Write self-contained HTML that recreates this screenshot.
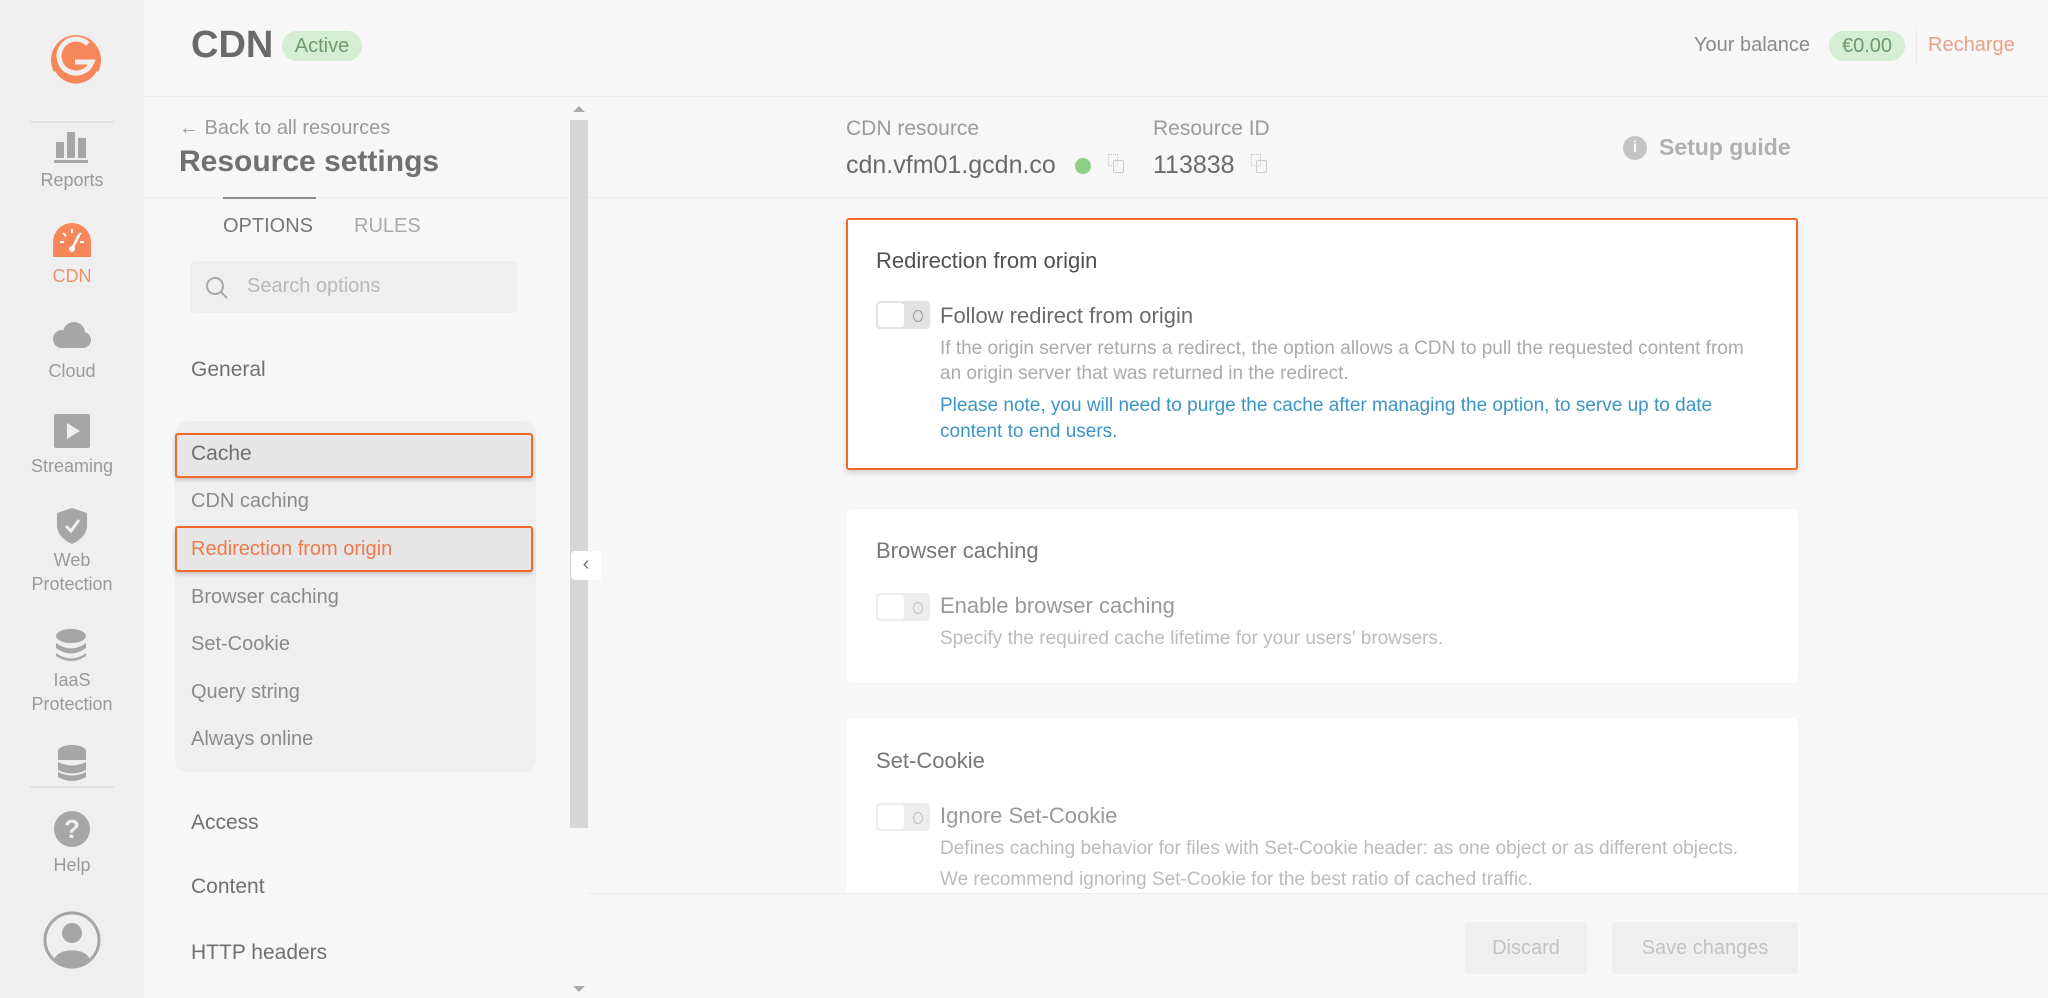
<!DOCTYPE html>
<html><head><meta charset="utf-8"><style>
*{margin:0;padding:0;box-sizing:border-box}
body{width:2048px;height:998px;position:relative;overflow:hidden;background:#f7f7f7;font-family:"Liberation Sans",sans-serif;color:#666}
.a{position:absolute;white-space:nowrap}
.sb{position:absolute;left:0;top:0;width:144px;height:998px;background:#efefef}
.lbl{position:absolute;width:144px;text-align:center;font-size:18px;color:#9a9a9a;line-height:24px}
.item{position:absolute;left:191px;font-size:20px;color:#8a8a8a;line-height:24px}
.sec{position:absolute;left:191px;font-size:21px;color:#707070;line-height:24px}
.card{position:absolute;left:846px;width:952px;background:#fff;border-radius:6px}
.tg{position:absolute;width:54px;height:28px;border-radius:4px;background:#e2e2e2}
.tg:before{content:"";position:absolute;left:2px;top:2px;width:26px;height:24px;background:#fff;border-radius:3px}
.tg:after{content:"";position:absolute;left:37px;top:9px;width:8px;height:10px;border:1.5px solid #999;border-radius:50%}
.ct{position:absolute;left:30px;font-size:22px;color:#777;line-height:26px}
.cl{position:absolute;left:94px;font-size:22px;color:#999;line-height:26px}
.cd{position:absolute;left:94px;font-size:19px;color:#bbb;line-height:24px}
</style></head><body>
<div class="sb">
 <svg class="a" style="left:48px;top:32px" width="56" height="56" viewBox="0 0 56 56"><circle cx="28" cy="28" r="25" fill="#f5875a"/><path d="M40 12 A17 17 0 1 0 44 30 L27 30" fill="none" stroke="#efefef" stroke-width="5"/><path d="M6 40 A25 25 0 0 0 50 40" fill="none" stroke="#efefef" stroke-width="3"/></svg>
 <div class="a" style="left:30px;top:121px;width:84px;height:2px;background:#e2e2e2"></div>
 <svg class="a" style="left:54px;top:128px" width="34" height="36"><rect x="2" y="14" width="8" height="16" fill="#a6a6a6"/><rect x="13" y="4" width="8" height="26" fill="#a6a6a6"/><rect x="24" y="10" width="8" height="20" fill="#a6a6a6"/><rect x="0" y="32" width="34" height="3" fill="#a6a6a6"/></svg>
 <div class="lbl" style="top:168px">Reports</div>
 <svg class="a" style="left:53px;top:223px" width="38" height="34"><path d="M0 34 L0 19 A19 19 0 0 1 38 19 L38 34 Z" fill="#f5875a"/><path d="M19 26 L26 12" stroke="#fff" stroke-width="2.5"/><circle cx="19" cy="26" r="3" fill="#fff"/><path d="M7 19h4M27 19h4M19 6v4M10 10l3 3M28 10l-3 3" stroke="#fff" stroke-width="2"/></svg>
 <div class="lbl" style="top:264px;color:#f09068">CDN</div>
 <svg class="a" style="left:52px;top:320px" width="40" height="30"><circle cx="22" cy="13" r="11" fill="#a6a6a6"/><circle cx="10" cy="19" r="9" fill="#a6a6a6"/><circle cx="31" cy="20" r="8" fill="#a6a6a6"/><rect x="10" y="18" width="22" height="10" fill="#a6a6a6"/></svg>
 <div class="lbl" style="top:359px">Cloud</div>
 <svg class="a" style="left:54px;top:414px" width="36" height="34"><rect width="36" height="34" rx="2" fill="#a6a6a6"/><path d="M13 9 L26 17 L13 25Z" fill="#efefef"/></svg>
 <div class="lbl" style="top:454px">Streaming</div>
 <svg class="a" style="left:57px;top:508px" width="30" height="36"><path d="M15 0 L30 5 L30 17 C30 27 22 33 15 36 C8 33 0 27 0 17 L0 5Z" fill="#a6a6a6"/><path d="M9 18 L14 23 L22 12" stroke="#efefef" stroke-width="3" fill="none"/></svg>
 <div class="lbl" style="top:548px">Web<br>Protection</div>
 <svg class="a" style="left:54px;top:628px" width="34" height="34"><ellipse cx="17" cy="8" rx="15" ry="7" fill="#a6a6a6"/><path d="M2 15 Q17 26 32 15 L32 20 Q17 31 2 20Z" fill="#a6a6a6"/><path d="M2 25 Q17 36 32 25 L32 28 Q17 38 2 28Z" fill="#a6a6a6"/></svg>
 <div class="lbl" style="top:668px">IaaS<br>Protection</div>
 <svg class="a" style="left:57px;top:745px" width="30" height="38"><ellipse cx="15" cy="6" rx="14" ry="6" fill="#a6a6a6"/><rect x="1" y="6" width="28" height="9" fill="#a6a6a6"/><path d="M1 17 Q15 24 29 17 L29 25 Q15 32 1 25Z" fill="#a6a6a6"/><path d="M1 27 Q15 34 29 27 L29 32 Q15 40 1 32Z" fill="#a6a6a6"/></svg>
 <div class="a" style="left:30px;top:786px;width:84px;height:2px;background:#e2e2e2"></div>
 <svg class="a" style="left:54px;top:811px" width="36" height="36"><circle cx="18" cy="18" r="18" fill="#a6a6a6"/><text x="18" y="27" text-anchor="middle" font-size="26" font-weight="bold" fill="#efefef" font-family="Liberation Sans">?</text></svg>
 <div class="lbl" style="top:853px">Help</div>
 <svg class="a" style="left:43px;top:911px" width="58" height="58"><circle cx="29" cy="29" r="27" fill="none" stroke="#a6a6a6" stroke-width="3"/><circle cx="29" cy="22" r="10" fill="#a6a6a6"/><path d="M11 49 C14 36 44 36 47 49 A27 27 0 0 1 11 49Z" fill="#a6a6a6"/></svg>
</div>
<div class="a" style="left:144px;top:96px;width:1904px;height:1px;background:#ececec"></div>
<div class="a" style="left:191px;top:23px;font-size:38px;font-weight:bold;color:#6a6a6a;line-height:44px">CDN</div>
<div class="a" style="left:282px;top:31px;width:80px;height:30px;border-radius:15px;background:#d4edd3;color:#6e9a6e;font-size:20px;line-height:30px;text-align:center">Active</div>
<div class="a" style="left:1694px;top:34px;font-size:20px;color:#8a8a8a">Your balance</div>
<div class="a" style="left:1829px;top:31px;width:76px;height:30px;border-radius:15px;background:#d4edd3;color:#6e9a6e;font-size:20px;line-height:30px;text-align:center">€0.00</div>
<div class="a" style="left:1916px;top:30px;width:1px;height:32px;background:#e8e8e8"></div>
<div class="a" style="left:1928px;top:34px;font-size:20px;color:#eb9f85">Recharge</div>
<!-- left panel -->
<div class="a" style="left:179px;top:117px;font-size:20px;color:#9a9a9a">← Back to all resources</div>
<div class="a" style="left:179px;top:145px;font-size:30px;font-weight:bold;color:#707070">Resource settings</div>
<div class="a" style="left:144px;top:197px;width:426px;height:1px;background:#ececec"></div>
<div class="a" style="left:588px;top:197px;width:1460px;height:1px;background:#ececec"></div>
<div class="a" style="left:223px;top:197px;width:93px;height:2px;background:#8c8c8c"></div>
<div class="a" style="left:223px;top:215px;font-size:20px;color:#777">OPTIONS</div>
<div class="a" style="left:354px;top:215px;font-size:20px;color:#aaa">RULES</div>
<div class="a" style="left:190px;top:261px;width:327px;height:52px;background:#efefef;border-radius:4px"></div>
<svg class="a" style="left:205px;top:276px" width="24" height="24"><circle cx="10" cy="10" r="8" fill="none" stroke="#a8a8a8" stroke-width="2"/><path d="M16 16 L22 22" stroke="#a8a8a8" stroke-width="2"/></svg>
<div class="a" style="left:247px;top:275px;font-size:20px;color:#b8b8b8">Search options</div>
<div class="sec" style="top:358px">General</div>
<div class="a" style="left:175px;top:421px;width:361px;height:351px;background:#efefef;border-radius:12px"></div>
<div class="a" style="left:175px;top:433px;width:358px;height:45px;background:#e6e6e6;border:2px solid #f26a2a;border-radius:3px;box-shadow:0 2px 4px rgba(0,0,0,.2)"></div>
<div class="sec" style="top:442px">Cache</div>
<div class="item" style="top:489px">CDN caching</div>
<div class="a" style="left:175px;top:526px;width:358px;height:46px;background:#e6e6e6;border:2px solid #f26a2a;border-radius:3px;box-shadow:0 2px 4px rgba(0,0,0,.2)"></div>
<div class="item" style="top:537px;color:#ec7a4c">Redirection from origin</div>
<div class="item" style="top:585px">Browser caching</div>
<div class="item" style="top:632px">Set-Cookie</div>
<div class="item" style="top:680px">Query string</div>
<div class="item" style="top:727px">Always online</div>
<div class="sec" style="top:811px">Access</div>
<div class="sec" style="top:875px">Content</div>
<div class="sec" style="top:941px">HTTP headers</div>
<div class="a" style="left:570px;top:120px;width:18px;height:708px;background:#d6d6d6"></div>
<div class="a" style="left:573px;top:106px;width:0;height:0;border-left:6px solid transparent;border-right:6px solid transparent;border-bottom:6px solid #aaa"></div>
<div class="a" style="left:573px;top:986px;width:0;height:0;border-left:6px solid transparent;border-right:6px solid transparent;border-top:6px solid #aaa"></div>
<div class="a" style="left:571px;top:551px;width:30px;height:29px;background:#fff;border-radius:4px 0 0 4px;font-size:20px;color:#777;text-align:center;line-height:27px">‹</div>
<!-- resource header -->
<div class="a" style="left:846px;top:117px;font-size:21px;color:#9a9a9a">CDN resource</div>
<div class="a" style="left:846px;top:151px;font-size:25px;color:#6a6a6a">cdn.vfm01.gcdn.co</div>
<div class="a" style="left:1075px;top:158px;width:16px;height:16px;border-radius:50%;background:#8ccf84"></div>
<div class="a" style="left:1108px;top:154px;width:10px;height:12px;border:1.5px dotted #ccc"></div>
<div class="a" style="left:1113px;top:160px;width:11px;height:13px;border:1.5px solid #ccc;border-radius:2px"></div>
<div class="a" style="left:1153px;top:117px;font-size:21px;color:#9a9a9a">Resource ID</div>
<div class="a" style="left:1153px;top:151px;font-size:25px;color:#6a6a6a">113838</div>
<div class="a" style="left:1251px;top:154px;width:10px;height:12px;border:1.5px dotted #ccc"></div>
<div class="a" style="left:1256px;top:160px;width:11px;height:13px;border:1.5px solid #ccc;border-radius:2px"></div>
<div class="a" style="left:1623px;top:136px;width:24px;height:24px;border-radius:50%;background:#c4c4c4;color:#f7f7f7;font-size:16px;font-weight:bold;text-align:center;line-height:24px">i</div>
<div class="a" style="left:1659px;top:134px;font-size:23px;font-weight:bold;color:#b0b0b0">Setup guide</div>
<!-- cards -->
<div class="card" style="top:218px;height:252px;border:2px solid #f26a2a;border-radius:3px;box-shadow:0 3px 6px rgba(0,0,0,.15)">
 <div class="ct" style="top:28px;left:28px;color:#505050">Redirection from origin</div>
 <div class="tg" style="left:28px;top:81px"></div>
 <div class="cl" style="top:83px;left:92px;color:#6a6a6a">Follow redirect from origin</div>
 <div class="cd" style="top:117px;left:92px;color:#aaa">If the origin server returns a redirect, the option allows a CDN to pull the requested content from</div>
 <div class="cd" style="top:142px;left:92px;color:#aaa">an origin server that was returned in the redirect.</div>
 <div class="cd" style="top:174px;left:92px;color:#3b95c6">Please note, you will need to purge the cache after managing the option, to serve up to date</div>
 <div class="cd" style="top:200px;left:92px;color:#3b95c6">content to end users.</div>
</div>
<div class="card" style="top:509px;height:174px">
 <div class="ct" style="top:29px">Browser caching</div>
 <div class="tg" style="left:30px;top:84px;opacity:.6"></div>
 <div class="cl" style="top:84px">Enable browser caching</div>
 <div class="cd" style="top:118px">Specify the required cache lifetime for your users' browsers.</div>
</div>
<div class="card" style="top:718px;height:175px;border-radius:6px 6px 0 0">
 <div class="ct" style="top:30px">Set-Cookie</div>
 <div class="tg" style="left:30px;top:85px;opacity:.6"></div>
 <div class="cl" style="top:85px">Ignore Set-Cookie</div>
 <div class="cd" style="top:119px">Defines caching behavior for files with Set-Cookie header: as one object or as different objects.</div>
 <div class="cd" style="top:150px">We recommend ignoring Set-Cookie for the best ratio of cached traffic.</div>
</div>
<div class="a" style="left:588px;top:893px;width:1460px;height:105px;background:#f7f7f7;border-top:1px solid #ececec"></div>
<div class="a" style="left:1465px;top:922px;width:122px;height:52px;background:#efefef;border-radius:3px;font-size:20px;color:#c2c2c2;text-align:center;line-height:52px">Discard</div>
<div class="a" style="left:1612px;top:922px;width:186px;height:52px;background:#efefef;border-radius:3px;font-size:20px;color:#c2c2c2;text-align:center;line-height:52px">Save changes</div>
</body></html>
